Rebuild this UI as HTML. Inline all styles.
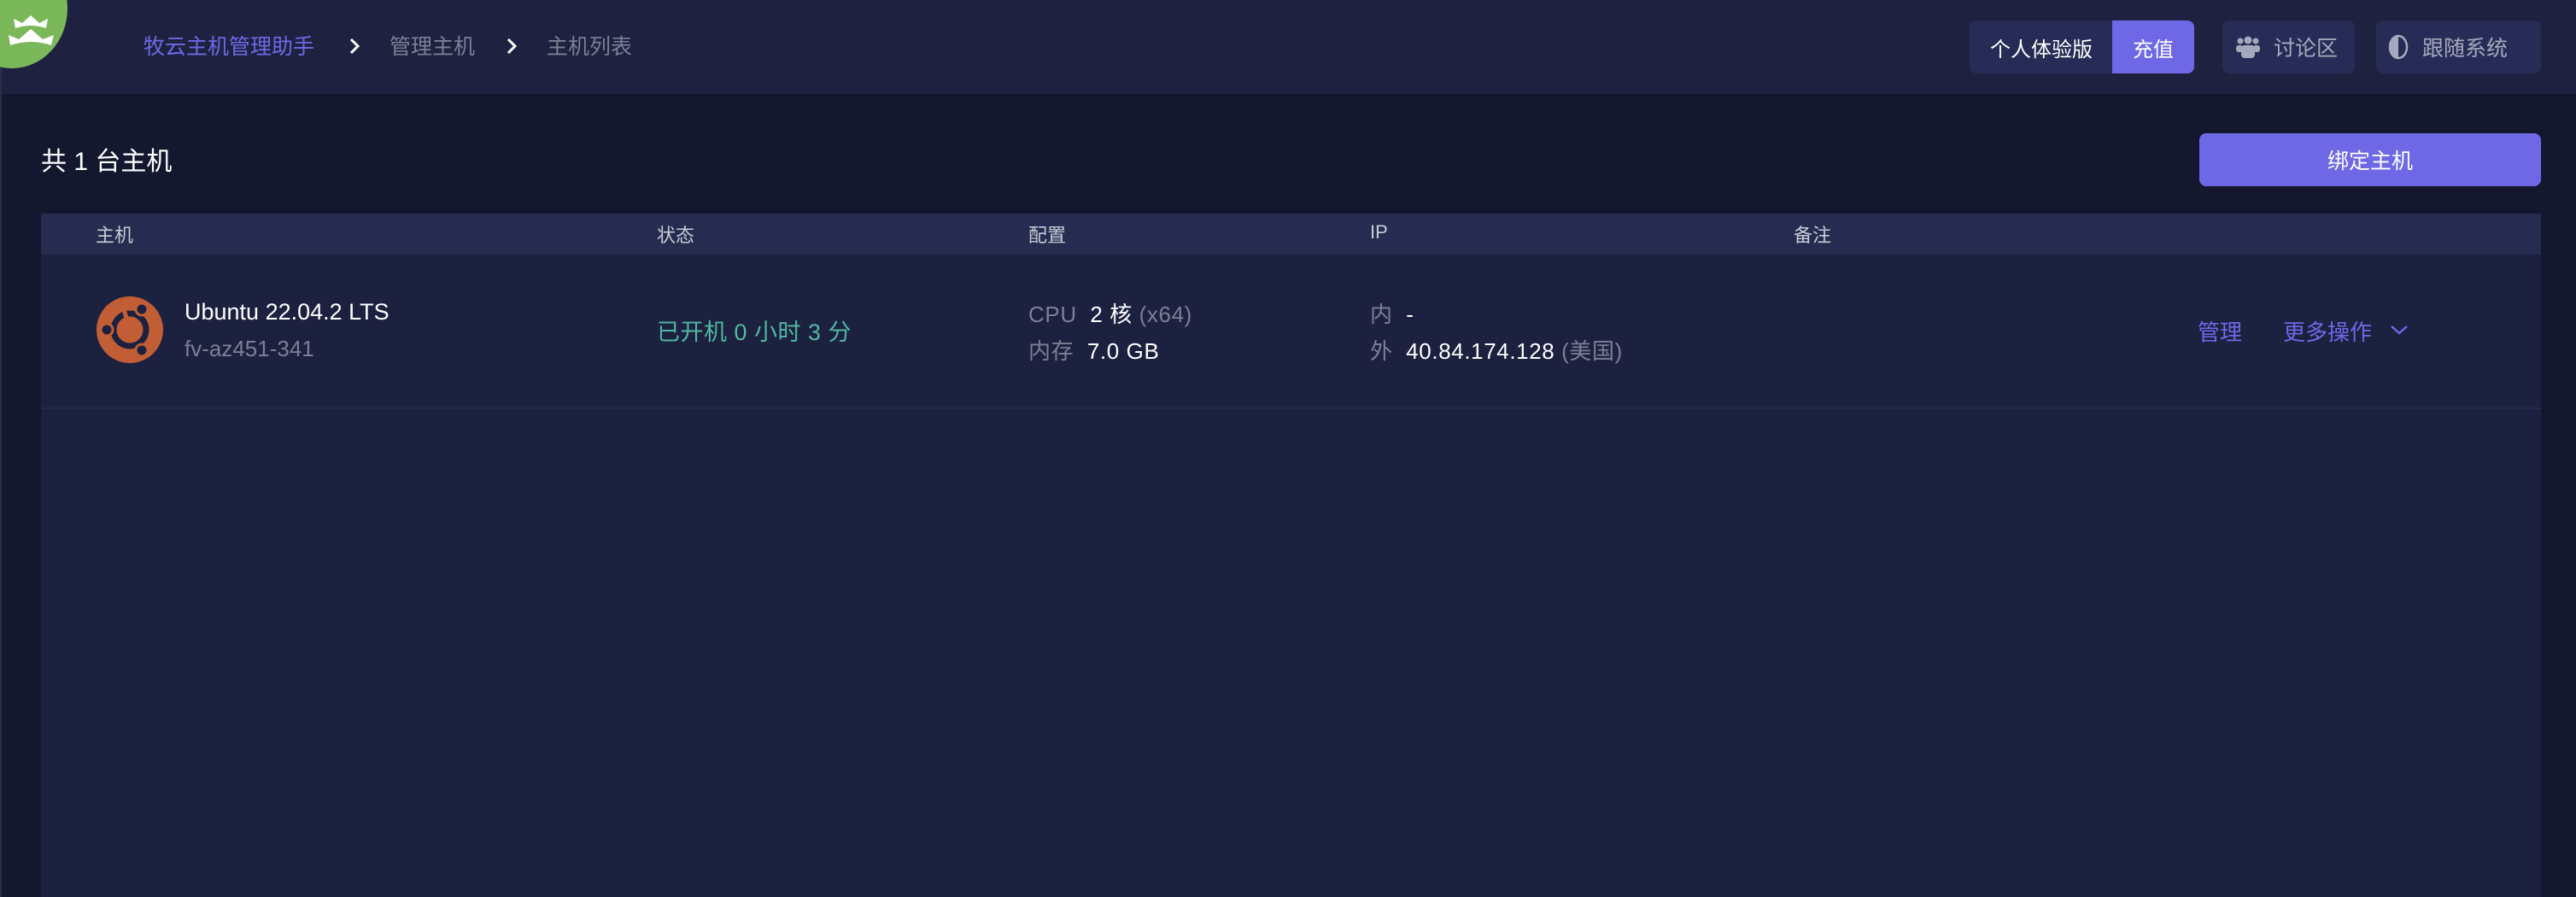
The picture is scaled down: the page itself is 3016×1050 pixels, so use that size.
<!DOCTYPE html>
<html><head><meta charset="utf-8"><style>
*{margin:0;padding:0;box-sizing:border-box}
body{width:3016px;height:1050px;overflow:hidden;background:#13182f;font-family:"Liberation Sans","Noto Sans CJK SC",sans-serif;position:relative}
.a{position:absolute;white-space:nowrap}
.hdr{position:absolute;left:0;top:0;width:3016px;height:110px;background:#1e2240}
.btn{position:absolute;background:#262c55;border-radius:8px;color:#a6a9bd;font-size:25px;display:flex;align-items:center}
</style></head><body>
<div class="hdr"></div>
<div class="a" style="left:0;top:0;width:2px;height:1050px;background:#2a2f4a"></div>
<svg class="a" style="left:0;top:0" width="90" height="84" viewBox="0 0 90 84">
<ellipse cx="14" cy="10" rx="65" ry="70" fill="#7bb85a"/>
<path d="M16 22 L26 27 L36 18 L46 27 L56 22 L54 33 Q36 27 18 33Z" fill="#fff"/>
<path d="M10 41 L22 46 L36 34 L50 46 L63 41 L60 53 Q36 45 12 53Z" fill="#fff"/>
</svg>
<div class="a" style="left:168px;top:35px;font-size:25px;color:#6e68e6">牧云主机管理助手</div>
<svg class="a" style="left:408px;top:44px" width="14" height="20" viewBox="0 0 14 20"><path d="M3 2 L11 10 L3 18" fill="none" stroke="#fff" stroke-width="3"/></svg>
<div class="a" style="left:456px;top:35px;font-size:25px;color:#7c7f94">管理主机</div>
<svg class="a" style="left:592px;top:44px" width="14" height="20" viewBox="0 0 14 20"><path d="M3 2 L11 10 L3 18" fill="none" stroke="#fff" stroke-width="3"/></svg>
<div class="a" style="left:640px;top:35px;font-size:25px;color:#7c7f94">主机列表</div>

<div class="btn" style="left:2306px;top:24px;width:263px;height:62px;overflow:hidden;color:#fff">
<span style="padding-left:24px;width:167px;font-size:24px">个人体验版</span>
<span style="background:#6e68e6;height:62px;flex:1;display:flex;align-items:center;justify-content:center;font-size:24px">充值</span></div>
<div class="btn" style="left:2602px;top:24px;width:155px;height:62px">
<svg style="margin-left:16px" width="28" height="26" viewBox="0 0 28 26" fill="#a6a9bd"><circle cx="5" cy="6" r="3.5"/><circle cx="23" cy="6" r="3.5"/><circle cx="14" cy="5" r="4.5"/><rect x="0" y="11" width="8" height="8" rx="3"/><rect x="20" y="11" width="8" height="8" rx="3"/><rect x="6" y="11" width="16" height="15" rx="4"/></svg>
<span style="margin-left:16px">讨论区</span></div>
<div class="btn" style="left:2782px;top:24px;width:193px;height:62px">
<svg style="margin-left:14px" width="24" height="30" viewBox="0 0 24 30"><ellipse cx="12" cy="15" rx="10" ry="13" fill="none" stroke="#a6a9bd" stroke-width="2.5"/><path d="M12 2 A10 13 0 0 0 12 28Z" fill="#a6a9bd"/></svg>
<span style="margin-left:16px">跟随系统</span></div>

<div class="a" style="left:48px;top:164px;font-size:30px;color:#fff">共 1 台主机</div>
<div class="a" style="left:2575px;top:156px;width:400px;height:62px;background:#6e68e6;border-radius:8px;color:#fff;font-size:25px;display:flex;align-items:center;justify-content:center">绑定主机</div>

<div class="a" style="left:48px;top:250px;width:2927px;height:800px;background:#1d2140"></div>
<div class="a" style="left:48px;top:250px;width:2927px;height:48px;background:#252c4f"></div>
<div class="a" style="left:48px;top:477px;width:2927px;height:2px;background:#252b4b"></div>
<div class="a" style="left:112px;top:258px;font-size:22px;color:#c8cad6">主机</div>
<div class="a" style="left:769px;top:258px;font-size:22px;color:#c8cad6">状态</div>
<div class="a" style="left:1204px;top:258px;font-size:22px;color:#c8cad6">配置</div>
<div class="a" style="left:1604px;top:259px;font-size:22px;color:#c8cad6">IP</div>
<div class="a" style="left:2100px;top:258px;font-size:22px;color:#c8cad6">备注</div>

<svg class="a" style="left:113px;top:347px" width="78" height="78" viewBox="0 0 78 78">
<circle cx="39" cy="39" r="39" fill="#c25e35"/>
<circle cx="39" cy="39" r="19" fill="none" stroke="#1d2140" stroke-width="7"/>
<line x1="39" y1="39" x2="30" y2="8" stroke="#c25e35" stroke-width="5"/>
<g fill="#1d2140" stroke="#c25e35" stroke-width="3"><circle cx="12" cy="39" r="7"/><circle cx="53" cy="15" r="7"/><circle cx="53" cy="63" r="7"/></g>
</svg>
<div class="a" style="left:216px;top:350px;font-size:27px;color:#fff">Ubuntu 22.04.2 LTS</div>
<div class="a" style="left:216px;top:393px;font-size:26px;color:#7c7f94">fv-az451-341</div>
<div class="a" style="left:769px;top:367px;font-size:27px;color:#4fb8a0;letter-spacing:0.5px">已开机 0 小时 3 分</div>
<div class="a" style="left:1204px;top:348px;font-size:26px;color:#7c7f94;letter-spacing:0.6px">CPU&nbsp; <span style="color:#fff">2 核</span> (x64)</div>
<div class="a" style="left:1204px;top:391px;font-size:26px;color:#7c7f94;letter-spacing:0.6px">内存&nbsp; <span style="color:#fff">7.0 GB</span></div>
<div class="a" style="left:1604px;top:348px;font-size:26px;color:#7c7f94;letter-spacing:0.6px">内&nbsp; <span style="color:#fff">-</span></div>
<div class="a" style="left:1604px;top:391px;font-size:26px;color:#7c7f94;letter-spacing:0.6px">外&nbsp; <span style="color:#fff">40.84.174.128</span> (美国)</div>
<div class="a" style="left:2573px;top:369px;font-size:26px;color:#6e68e6">管理</div>
<div class="a" style="left:2673px;top:369px;font-size:26px;color:#6e68e6">更多操作</div>
<svg class="a" style="left:2797px;top:378px" width="24" height="16" viewBox="0 0 24 16"><path d="M3 4 L12 12 L21 4" fill="none" stroke="#6e68e6" stroke-width="2.5"/></svg>
</body></html>
